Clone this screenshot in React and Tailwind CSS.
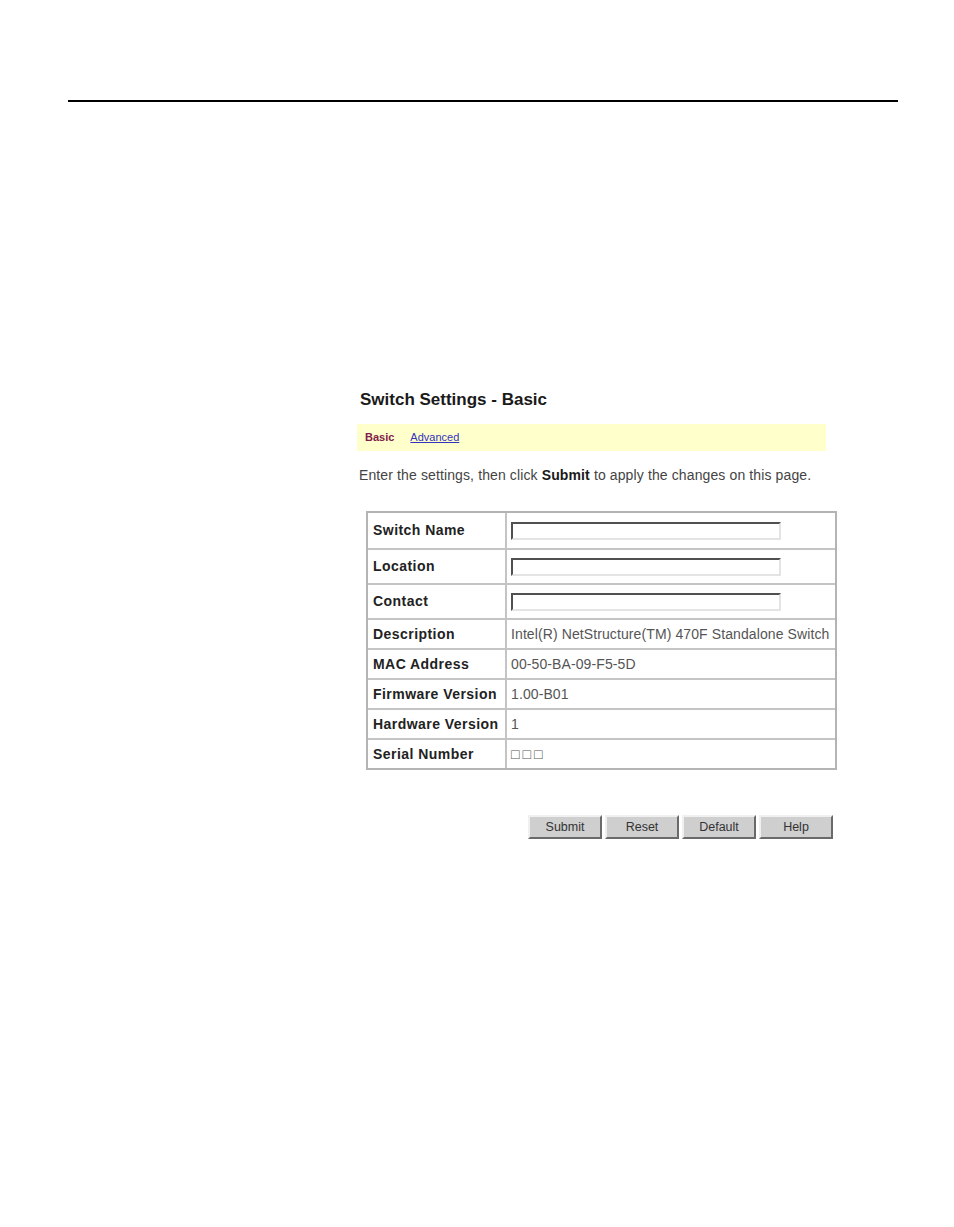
import React from 'react';

const rows = [
    { label: 'Switch Name', input: true },
    { label: 'Location', input: true },
    { label: 'Contact', input: true },
    { label: 'Description', value: 'Intel(R) NetStructure(TM) 470F Standalone Switch' },
    { label: 'MAC Address', value: '00-50-BA-09-F5-5D' },
    { label: 'Firmware Version', value: '1.00-B01' },
    { label: 'Hardware Version', value: '1' },
    { label: 'Serial Number', value: '\u25A1\u25A1\u25A1', serial: true },
];

const buttons = ['Submit', 'Reset', 'Default', 'Help'];

const App = () => {
    return (
        <div className="w-[954px] h-[1227px] bg-white font-['Liberation_Sans',Arial,sans-serif]">
            <div className="pt-[100px] pl-[68px] pr-[56px]">
                <div className="h-[2px] bg-black" />
            </div>

            <div className="ml-[357px] w-[481px] mt-[288px]">
                {/* Heading */}
                <h1 className="pl-[3px] text-[17px] leading-[20px] font-bold text-[#1a1a1a]">
                    Switch Settings - Basic
                </h1>

                {/* Tabs bar */}
                <div className="mt-[14px] w-[469px] h-[27px] bg-[#ffffcc] flex items-center pl-[8px] text-[11px]">
                    <span className="font-bold text-[#80204a]">Basic</span>
                    <span className="ml-[16px] text-[#3333bb] underline">Advanced</span>
                </div>

                {/* Instruction */}
                <p className="mt-[16px] pl-[2px] text-[14px] leading-[16px] tracking-[0.12px] text-[#444]">
                    Enter the settings, then click <span className="font-bold text-[#1a1a1a]">Submit</span> to apply the changes on this page.
                </p>

                {/* Settings table */}
                <div className="mt-[28px] ml-[9px] w-[471px] border-2 border-[#b4b4b4]">
                    {rows.map((row, index) => (
                        <div
                            key={row.label}
                            className={`flex ${row.input ? 'h-[35px]' : 'h-[30px]'} ${index > 0 ? 'border-t-2 border-[#c4c4c4]' : ''}`}
                        >
                            <div className="w-[139px] shrink-0 flex items-center pl-[5px] border-r-2 border-[#c4c4c4] text-[14px] font-bold tracking-[0.45px] text-[#222]">
                                {row.label}
                            </div>
                            <div className={`flex-1 flex items-center pl-[4px] text-[14px] text-[#555] whitespace-nowrap overflow-hidden ${row.serial ? 'tracking-[3px]' : 'tracking-[0.1px]'}`}>
                                {row.input ? (
                                    <input
                                        type="text"
                                        className="w-[270px] h-[18px] bg-white border-2 border-t-[#505050] border-l-[#505050] border-b-[#e4e4e4] border-r-[#e4e4e4] outline-none"
                                    />
                                ) : (
                                    row.value
                                )}
                            </div>
                        </div>
                    ))}
                </div>

                {/* Buttons */}
                <div className="mt-[45px] flex justify-end gap-[3px] pr-[5px]">
                    {buttons.map((label) => (
                        <button
                            key={label}
                            className="w-[74px] h-[24px] bg-[#cfcfcf] border-2 border-t-[#f0f0f0] border-l-[#f0f0f0] border-b-[#6a6a6a] border-r-[#6a6a6a] text-[12.5px] text-[#333]"
                        >
                            {label}
                        </button>
                    ))}
                </div>
            </div>
        </div>
    );
};

export default App;
